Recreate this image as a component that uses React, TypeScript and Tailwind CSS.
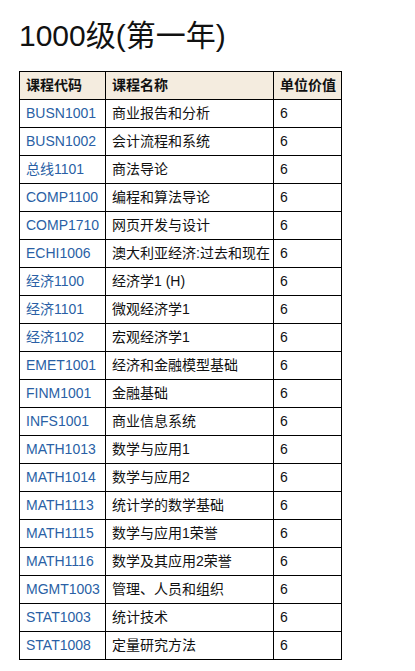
// course list for year one
const courses: [string, string][] = [
  ["BUSN1001", "商业报告和分析"],
  ["BUSN1002", "会计流程和系统"],
  ["总线1101", "商法导论"],
  ["COMP1100", "编程和算法导论"],
  ["COMP1710", "网页开发与设计"],
  ["ECHI1006", "澳大利亚经济:过去和现在"],
  ["经济1100", "经济学1 (H)"],
  ["经济1101", "微观经济学1"],
  ["经济1102", "宏观经济学1"],
  ["EMET1001", "经济和金融模型基础"],
  ["FINM1001", "金融基础"],
  ["INFS1001", "商业信息系统"],
  ["MATH1013", "数学与应用1"],
  ["MATH1014", "数学与应用2"],
  ["MATH1113", "统计学的数学基础"],
  ["MATH1115", "数学与应用1荣誉"],
  ["MATH1116", "数学及其应用2荣誉"],
  ["MGMT1003", "管理、人员和组织"],
  ["STAT1003", "统计技术"],
  ["STAT1008", "定量研究方法"],
]

export default function App(){
    return(
        <main className="min-h-screen bg-white pl-[19px] pt-[16px] text-[#111] font-['Liberation_Sans','Noto_Sans_CJK_SC',sans-serif]">
            <h2 className="text-[30px] leading-[40px] font-normal">1000级(第一年)</h2>

            <table className="mt-[15px] w-[323px] table-fixed border-collapse text-[14px]">
                <colgroup>
                    <col className="w-[86px]" />
                    <col className="w-[168px]" />
                    <col className="w-[68px]" />
                </colgroup>
                <thead>
                    <tr className="h-[28px] bg-[#f4ecdf]">
                        <th className="border border-black pl-[6px] pr-0 text-left font-bold whitespace-nowrap">课程代码</th>
                        <th className="border border-black pl-[6px] pr-0 text-left font-bold whitespace-nowrap">课程名称</th>
                        <th className="border border-black pl-[6px] pr-0 text-left font-bold whitespace-nowrap">单位价值</th>
                    </tr>
                </thead>
                <tbody>
                    {courses.map(([code, name]) => (
                        <tr key={code} className="h-[28px]">
                            <td className="border border-black pl-[6px] pr-0 whitespace-nowrap text-[#2a5fa5]">{code}</td>
                            <td className="border border-black pl-[6px] pr-0 whitespace-nowrap">{name}</td>
                            <td className="border border-black pl-[6px] pr-0">6</td>
                        </tr>
                    ))}
                </tbody>
            </table>
        </main>
    )
}
